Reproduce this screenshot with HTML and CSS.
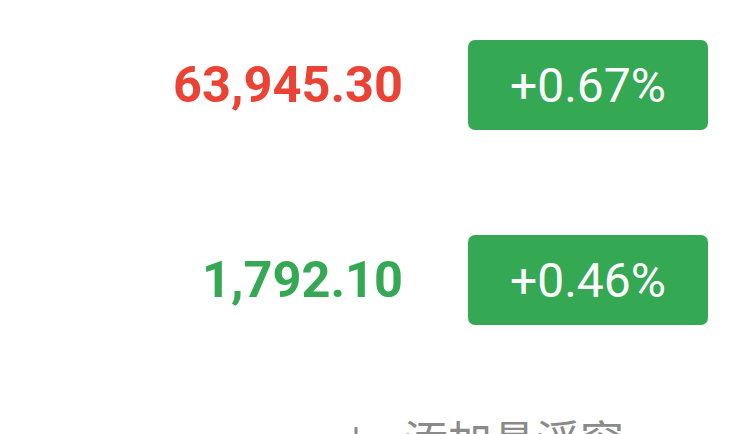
FILE: index.html
```html
<!DOCTYPE html>
<html lang="zh-CN">
<head>
  <meta charset="UTF-8" />
  <meta name="viewport" content="width=device-width, initial-scale=1.0" />
  <title>自选</title>
  <link rel="stylesheet" href="styles.css">
</head>
<body>
  <div class="quote-list">
    <div class="quote-row">
      <span class="price down">63,945.30</span>
      <span class="change">+0.67%</span>
    </div>
    <div class="quote-row">
      <span class="price up">1,792.10</span>
      <span class="change">+0.46%</span>
    </div>
  </div>

  <div class="add-row">
    <svg class="add-icon" viewBox="0 0 40 40" width="40" height="40">
      <path d="M20 4 V36 M4 20 H36" stroke="#8a8a8a" stroke-width="3" fill="none" />
    </svg>
    <span class="add-text">添加悬浮窗</span>
  </div>
</body>
</html>
```

FILE: styles.css
```css
* {
  box-sizing: border-box;
}

body {
  margin: 0;
  padding: 0;
  font-family: Roboto, "Noto Sans", sans-serif;
  background: #ffffff;
  overflow: hidden;
  height: 100vh;
}

.quote-list {
  display: flex;
  flex-direction: column;
  gap: 105px;
  padding: 40px 45px 0 0;
}

.quote-row {
  display: flex;
  justify-content: flex-end;
  align-items: center;
  gap: 65px;
  height: 90px;
}

.price {
  font-size: 50.5px;
  font-weight: 700;
  line-height: 1;
}

.price.down {
  color: #ea4335;
}

.price.up {
  color: #34a853;
}

.change {
  width: 240px;
  height: 90px;
  border-radius: 7px;
  background: #34a853;
  color: #ffffff;
  font-size: 48px;
  display: flex;
  align-items: center;
  justify-content: center;
}

.add-row {
  display: flex;
  align-items: flex-start;
  gap: 28px;
  margin-top: 92px;
  padding-left: 336px;
}

.add-icon {
  margin-top: 6px;
}

.add-text {
  font-family: "Noto Sans CJK SC", sans-serif;
  font-size: 44px;
  line-height: 1;
  color: #8a8a8a;
}
```
